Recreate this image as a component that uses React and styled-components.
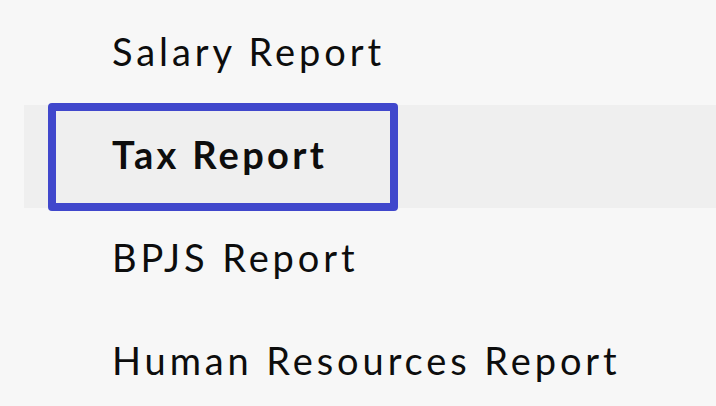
import styled, { createGlobalStyle } from 'styled-components';

const GlobalStyle = createGlobalStyle`
  html, body {
    margin: 0;
    padding: 0;
    background-color: #f7f7f7;
  }
`;

const Menu = styled.nav`
  display: flex;
  flex-direction: column;
  padding-top: 2px;
  font-family: Lato, "Open Sans", sans-serif;
`;

const MenuRow = styled.div`
  display: flex;
  align-items: center;
  height: 103px;
  margin-left: 24px;
  background-color: ${({ $active }) => ($active ? '#efefef' : 'transparent')};
`;

const MenuLink = styled.a`
  display: flex;
  align-items: center;
  box-sizing: border-box;
  width: 350px;
  height: 108px;
  margin-left: 24px;
  padding: 0 0 6px 56px;
  border: 8px solid ${({ $focused }) => ($focused ? '#4047cc' : 'transparent')};
  border-radius: 4px;
  color: #0d0d0d;
  font-size: 38px;
  font-weight: ${({ $active }) => ($active ? 700 : 400)};
  letter-spacing: ${({ $active }) => ($active ? '3.3px' : '3.9px')};
  white-space: nowrap;
  text-decoration: none;
  cursor: pointer;
`;

const items = [
  { label: 'Salary Report' },
  { label: 'Tax Report', active: true },
  { label: 'BPJS Report' },
  { label: 'Human Resources Report' }
];

export default function App () {
  return (
    <>
      <GlobalStyle />
      <Menu>
        {items.map(item => (
          <MenuRow key={item.label} $active={item.active}>
            <MenuLink href="#" $active={item.active} $focused={item.active}>
              {item.label}
            </MenuLink>
          </MenuRow>
        ))}
      </Menu>
    </>
  );
}
